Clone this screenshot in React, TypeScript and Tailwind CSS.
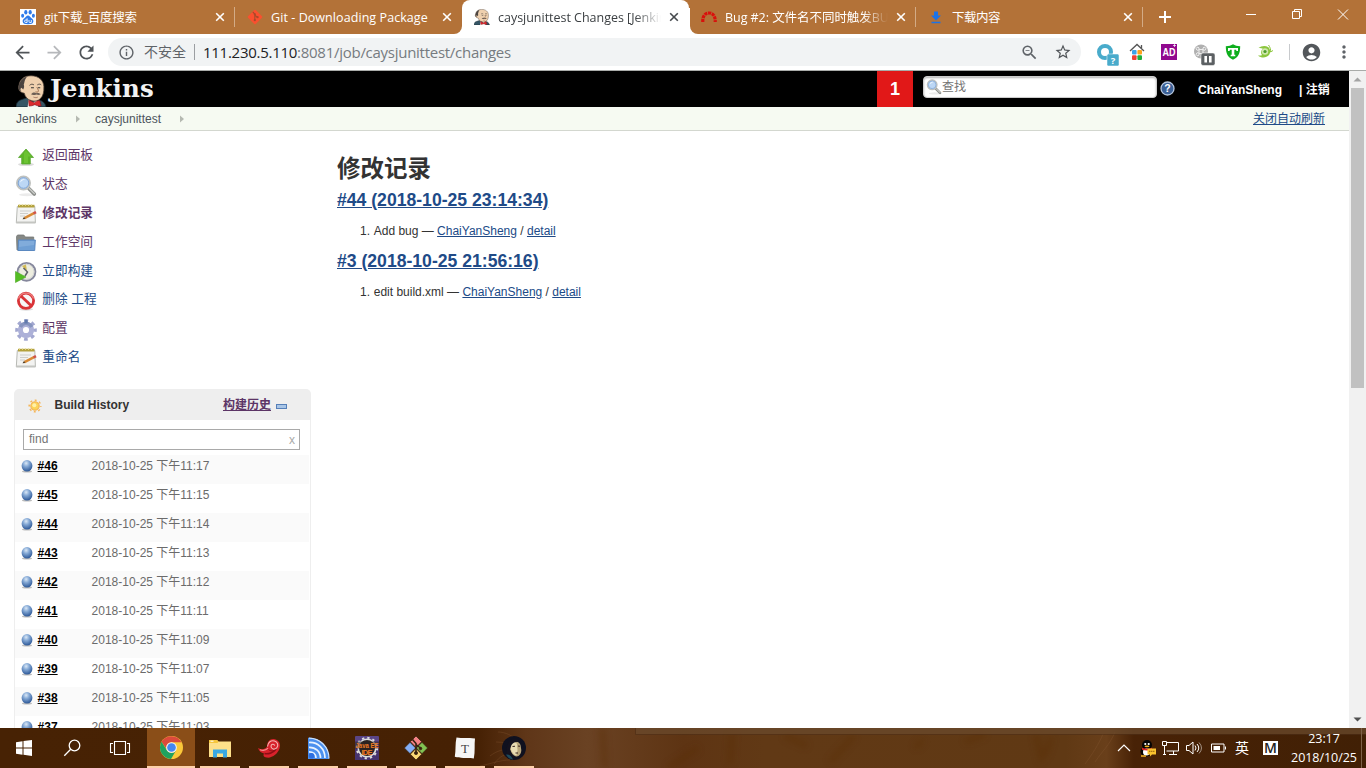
import type { ReactNode } from 'react';
import {
  MdAccountCircle,
  MdArrowBack,
  MdArrowForward,
  MdInfoOutline,
  MdMoreVert,
  MdRefresh,
  MdStarBorder,
  MdZoomOut,
} from 'react-icons/md';

const UI = "font-['Open_Sans','Noto_Sans_CJK_SC',sans-serif]";
const PAGE = "font-['Liberation_Sans','Noto_Sans_CJK_SC',sans-serif]";

/* ---------- favicons ---------- */

function BaiduIcon() {
  return (
    <svg width="16" height="16" viewBox="0 0 16 16">
      <rect width="16" height="16" fill="#fff" />
      <g fill="#2e7bea">
        <ellipse cx="5.8" cy="3.2" rx="1.6" ry="2.2" />
        <ellipse cx="10.2" cy="3.2" rx="1.6" ry="2.2" />
        <ellipse cx="2.6" cy="6.7" rx="1.5" ry="2" />
        <ellipse cx="13.4" cy="6.7" rx="1.5" ry="2" />
        <path d="M8 6.6c-1.6 0-2.2 1.5-3.3 2.5C3.400 10.200 2.400 11 2.700 12.800c.3 1.900 2 2.400 5.300 2.400s5-.5 5.300-2.400c.3-1.800-.7-2.600-2-3.700C10.200 8.100 9.600 6.600 8 6.600z" />
      </g>
      <g fill="none" stroke="#fff" strokeWidth=".9">
        <path d="M7.100 9.300v4.200H5.800a1.200 1.200 0 1 1 0-2.500h1.300M9 11v1.700c0 .6.300.8.800.8h1.500V11" />
      </g>
    </svg>
  );
}

function GitIcon() {
  return (
    <svg width="16" height="16" viewBox="0 0 16 16">
      <rect x="2.600" y="2.600" width="10.800" height="10.800" rx="1" fill="#f9502f" transform="rotate(45 8 8)" />
      <g stroke="#a9492a" strokeWidth="1.100" fill="none">
        <path d="M5.800 3l2 2v6M7.800 6l2.500 2.400" />
      </g>
      <g fill="#a9492a">
        <circle cx="7.800" cy="5.300" r="1.100" />
        <circle cx="10.600" cy="8.200" r="1.100" />
        <circle cx="7.800" cy="11.200" r="1.100" />
      </g>
    </svg>
  );
}

function Butler({ w, h }: { w: number; h: number }) {
  return (
    <svg width={w} height={h} viewBox="0 0 32 34" preserveAspectRatio="none">
      <path d="M0 34c0-4 2-7 6-8l6-2 8 2c5 0 10 2 11 8z" fill="#355565" stroke="#17242b" strokeWidth=".8" />
      <path d="M13 26l4 4 5-4 1 8H12z" fill="#f4f4f4" />
      <path d="M3 11C4 4 9 .8 15.500.8c8 0 13 5 13.300 11.500.2 6-.8 10-3.800 13-2 2-5.500 3.200-9 2-4-1-6.500-4-7.500-8C4 19 1.600 15 3 11z" fill="#efd0ae" stroke="#4b3c32" strokeWidth=".8" />
      <path d="M3 11C4.500 5 8 2.500 11.500 1.800 8.500 5 9 8 8 10c.8 2 .2 4-.6 5.500l-1.700-2c-1.500.5-1.500 3 .3 4C3 17 2 14 3 11z" fill="#4b4440" />
      <path d="M14 11c1.500-1.500 3-1.500 4.500-.5M22 10.500c1.500-1 3-1 4 0" stroke="#4b4440" strokeWidth="1" fill="none" />
      <path d="M15.500 13.500h3M22.500 13.500h2.500" stroke="#333" strokeWidth="1.100" />
      <path d="M21.500 13c1 2 2 3.500 1.500 4.500-.5.800-2 .8-2.800.3" stroke="#9a6b4b" strokeWidth="1" fill="none" />
      <path d="M15.500 20.500c2-2.300 4-2 6-1.200 1.700-.6 3 .2 4 1.200-2 1.200-3.300.5-4.500.2-2 .8-4 .9-5.500-.2z" fill="#6c5e54" />
      <path d="M18 23.500c2 .8 3.500.8 4.500 0" stroke="#a0705a" strokeWidth=".9" fill="none" />
      <path d="M13 27c2 0 3.500 1 6 2.500 1.500-1.500 3-2.500 5.500-2.500l1.500 6c-3 0-5-.5-6.500-1.500-2 1-4 1.500-6 1.500z" fill="#dc2a2f" stroke="#7d1215" strokeWidth=".6" />
    </svg>
  );
}

function RedmineIcon() {
  return (
    <svg width="16" height="16" viewBox="0 0 16 16">
      <path d="M1.800 13C1.500 8 3.500 4 8 4s6.500 4 6.200 9" fill="none" stroke="#d9100c" strokeWidth="3.200" strokeDasharray="3.100 .7" />
    </svg>
  );
}

function DownloadIcon() {
  return (
    <svg width="16" height="16" viewBox="0 0 16 16">
      <path d="M6 2.500h4v4h3L8 11.500 3 6.500h3zM3.500 12.700h9v1.600h-9z" fill="#1a73e8" />
    </svg>
  );
}

/* ---------- browser chrome ---------- */

function CloseX({ color }: { color: string }) {
  return (
    <svg width="16" height="16" viewBox="0 0 16 16" className="shrink-0">
      <path d="M4.200 4.200l7.600 7.600M11.800 4.200l-7.600 7.600" stroke={color} strokeWidth="1.600" />
    </svg>
  );
}

type TabProps = {
  icon: ReactNode;
  title: string;
  spacing: string;
  active?: boolean;
  divider?: boolean;
  fade?: boolean;
};

function Tab({ icon, title, spacing, active, divider, fade }: TabProps) {
  return (
    <div className={`relative flex h-[34px] w-[227px] shrink-0 items-center pr-[7px] pl-3 ${active ? 'rounded-t-lg bg-white' : ''}`}>
      {active && (
        <>
          <span className="absolute -right-px bottom-0 h-[26px] w-px bg-white" />
          <span className="absolute bottom-0 -left-2 h-2 w-2 bg-white" />
          <span className="absolute bottom-0 -left-2 h-2 w-2 rounded-br-lg bg-[#b37238]" />
          <span className="absolute -right-[9px] bottom-0 h-2 w-2 bg-white" />
          <span className="absolute -right-[9px] bottom-0 h-2 w-2 rounded-bl-lg bg-[#b37238]" />
        </>
      )}
      <span className="flex w-4 shrink-0">{icon}</span>
      <span
        className={`mt-px ml-2 w-[163px] shrink-0 overflow-hidden text-[12.500px] leading-5 whitespace-nowrap ${spacing} ${active ? 'text-[#3c4043]' : 'text-white'} ${fade ? '[mask-image:linear-gradient(to_right,black_84%,transparent)]' : ''}`}
      >
        {title}
      </span>
      <span className="ml-[5px] flex">
        <CloseX color={active ? '#45494d' : '#fff'} />
      </span>
      {divider && <span className="absolute top-[7px] right-0 h-5 w-px bg-[#d3ab86]" />}
    </div>
  );
}

function WindowButtons() {
  return (
    <div className="ml-auto flex h-[30px]">
      <svg width="46" height="30" viewBox="0 0 46 30" fill="none" stroke="#fff">
        <path d="M18 14.500h10" />
      </svg>
      <svg width="46" height="30" viewBox="0 0 46 30" fill="none" stroke="#fff">
        <path d="M18.500 11.500h7v7h-7zM20.500 11.500v-2h7v7h-2" />
      </svg>
      <svg width="46" height="30" viewBox="0 0 46 30" fill="none" stroke="#fff">
        <path d="M18 9.500l10 10M28 9.500l-10 10" />
      </svg>
    </div>
  );
}

function TabStrip() {
  return (
    <div className="flex h-[34px] bg-[#b37238] pl-2">
      <Tab icon={<BaiduIcon />} title="git下载_百度搜索" spacing="tracking-[-0.2px]" divider />
      <Tab icon={<GitIcon />} title="Git - Downloading Package" spacing="tracking-[0.07px]" />
      <Tab icon={<Butler w={16} h={16} />} title="caysjunittest Changes [Jenkin" spacing="tracking-[-0.02px]" active fade />
      <Tab icon={<RedmineIcon />} title="Bug #2: 文件名不同时触发BUG" spacing="tracking-[-0.05px]" divider fade />
      <Tab icon={<DownloadIcon />} title="下载内容" spacing="tracking-[-0.5px]" divider />
      <svg width="44" height="34" viewBox="0 0 44 34">
        <path d="M22 11v12M16 17h12" stroke="#fff" strokeWidth="2" />
      </svg>
      <WindowButtons />
    </div>
  );
}

function Extensions() {
  return (
    <>
      <svg width="24" height="28" viewBox="0 0 24 28" className="mt-1 ml-[14px] shrink-0">
        <circle cx="10" cy="12" r="6" fill="none" stroke="#49abcb" strokeWidth="4" />
        <rect x="12" y="14" width="12" height="12" rx="1.500" fill="#49abcb" stroke="#fff" strokeWidth=".5" />
        <text x="18" y="23.500" fontSize="9.500" fontWeight="700" fill="#fff" textAnchor="middle">?</text>
      </svg>
      <svg width="16" height="18" viewBox="0 0 16 18" className="ml-[10px] shrink-0">
        <path d="M1 8l7-6.500L15 8M12.500 2v3" stroke="#555" strokeWidth="1.300" fill="none" />
        <rect x="3" y="7" width="4.600" height="4.600" rx="1" fill="#3aa3e8" />
        <rect x="8.400" y="7" width="4.600" height="4.600" rx="1" fill="#fba21c" />
        <rect x="3" y="12.200" width="4.600" height="4.800" rx="1" fill="#ec4034" />
        <rect x="8.400" y="12.200" width="4.600" height="4.800" rx="1" fill="#1fae39" />
      </svg>
      <svg width="16" height="16" viewBox="0 0 16 16" className="ml-4 shrink-0">
        <rect width="16" height="16" fill="#91098f" />
        <text x="1.500" y="12.200" fontSize="11" fontWeight="700" fill="#fff" fontFamily="Liberation Sans" textLength="13" lengthAdjust="spacingAndGlyphs">AD</text>
        <path d="M12 1.500h3M13.500 0v3" stroke="#fff" strokeWidth=".7" />
      </svg>
      <svg width="22" height="22" viewBox="0 0 22 22" className="mt-[6px] ml-4 shrink-0">
        <circle cx="8" cy="7.500" r="7" fill="#b0b0b0" />
        <path d="M6 5.500h4v4H6zM6 5.500a1.500 1.500 0 1 1 0-1.500zM10 5.500a1.500 1.500 0 1 0 0-1.500zM6 9.500a1.500 1.500 0 1 0 0 1.500z" stroke="#eee" strokeWidth="1" fill="none" />
        <rect x="8" y="9" width="14" height="12.500" rx="2" fill="#5c6063" stroke="#fff" strokeWidth=".5" />
        <path d="M12.700 12v6.500M17.300 12v6.500" stroke="#fff" strokeWidth="2.600" />
      </svg>
      <svg width="16" height="16" viewBox="0 0 16 16" className="ml-[10px] shrink-0">
        <path d="M.8 2.200C4 2.200 6 1.500 8 .3c2 1.200 4 1.900 7.200 1.900C15.200 9.500 13 13.500 8 15.700 3 13.500.8 9.500.8 2.200z" fill="#0eae1d" />
        <path d="M3 4h10v3h-1.500l-.5-1.200H9.300v5h1v1.400H5.700v-1.400h1v-5H5L4.500 7H3z" fill="#fff" />
      </svg>
      <svg width="17" height="16" viewBox="0 0 17 16" className="ml-[15px] shrink-0">
        <path d="M2.500 4C5 2 9 1 12 3c2.500 2 2.800 5.500 1 8-2.500 3-7.500 3.500-11 .5 2 .2 3.500 0 4-.6C4.500 9.500 5 6 7 4.800 5.500 4 4 3.800 2.500 4z" fill="#8cc63e" />
        <circle cx="9" cy="7.500" r="3.200" fill="#cfe7ac" />
        <circle cx="9" cy="7.500" r="1.600" fill="#4d9c2f" />
        <path d="M12.500 1c1.500 2 2.500 4.500 2 7l2.500-1.500" stroke="#8cc63e" strokeWidth="1" fill="none" />
      </svg>
      <span className="ml-4 h-4 w-px shrink-0 bg-[#c8cacd]" />
      <MdAccountCircle size={21} className="ml-[11px] shrink-0 text-[#53575b]" />
      <MdMoreVert size={20} className="ml-[12px] shrink-0 text-[#5f6368]" />
    </>
  );
}

function Toolbar() {
  return (
    <div className="flex h-[36px] items-center bg-white pl-[12px]">
      <MdArrowBack size={21} className="shrink-0 text-[#505458]" />
      <MdArrowForward size={21} className="ml-[11px] shrink-0 text-[#b6b8bb]" />
      <MdRefresh size={21} className="ml-[11px] shrink-0 text-[#505458]" />
      <div className="ml-[11px] flex h-7 w-[973px] shrink-0 items-center rounded-full bg-[#f1f3f4] pl-[10px]">
        <MdInfoOutline size={17} className="shrink-0 text-[#5f6368]" />
        <span className="ml-[9px] w-[43px] text-[14px] leading-5 text-[#5f6368]">不安全</span>
        <span className="ml-[7px] h-4 w-px bg-[#9b9ea2]" />
        <span className="ml-2 text-[15px] leading-5 tracking-[-0.270px] text-[#767b80]">
          <span className="text-[#202124]">111.230.5.110</span>:8081/job/caysjunittest/changes
        </span>
        <MdZoomOut size={19} className="ml-auto text-[#5f6368]" />
        <MdStarBorder size={18} className="mr-[9px] ml-[15px] text-[#505458]" />
      </div>
      <Extensions />
    </div>
  );
}

/* ---------- page icons ---------- */

function Magnifier({ size }: { size: number }) {
  return (
    <svg width={size} height={size} viewBox="0 0 22 22">
      <ellipse cx="12" cy="19.800" rx="8" ry="1.500" fill="#ebebeb" />
      <path d="M13.800 13.500l5.500 5.500" stroke="#8b8e8a" strokeWidth="3.600" strokeLinecap="round" />
      <path d="M14.500 13.800l4.800 4.600" stroke="#c9cbc8" strokeWidth="1.400" strokeLinecap="round" />
      <circle cx="8.500" cy="8" r="6.600" fill="#bcd7f5" stroke="#bfc1be" strokeWidth="1.800" />
      <circle cx="8.500" cy="8" r="5.300" fill="none" stroke="#7fa5d6" strokeWidth="1" />
      <path d="M5 7.500c.5-3 3-4 5.500-3.500C8 5 6.500 6 5 7.500z" fill="#eef6fe" />
    </svg>
  );
}

function UpIcon() {
  return (
    <svg width="22" height="22" viewBox="0 0 22 22">
      <ellipse cx="11" cy="18.500" rx="8" ry="1.600" fill="#ddd" />
      <path d="M11 3l7.500 8.500h-3.200V18H6.700v-6.500H3.500z" fill="#5cb626" stroke="#5aa632" strokeWidth=".8" />
      <path d="M11 4.500l5.500 6H13V17H9V6.800z" fill="#77cc3c" opacity=".6" />
    </svg>
  );
}

function NotepadIcon() {
  return (
    <svg width="22" height="22" viewBox="0 0 22 22">
      <path d="M2.300 3.500h17.500l.6 16.300H1.300z" fill="#f3f3f1" stroke="#b8bab5" strokeWidth="1" />
      <path d="M1.300 18.500h19l.2 1.800H1.100z" fill="#c4c5c1" />
      <path d="M3 1.800h16.500v2.700H3z" fill="#b3a13c" />
      <path d="M4.500 1.200v1.600M7.500 1.200v1.600M10.500 1.200v1.600M13.500 1.200v1.600M16.500 1.200v1.600" stroke="#e8dd9a" strokeWidth="1" />
      <path d="M5 8h11M5 10.500h8M5 13h5" stroke="#cdcecb" strokeWidth="1" />
      <path d="M9.500 15.200l9.500-5" stroke="#d98a35" strokeWidth="2.500" />
      <path d="M18.500 10.400l2.500-1.300" stroke="#d0534b" strokeWidth="2.700" />
      <path d="M7.500 16.200l1.500-2.300 1.300 2.100z" fill="#4d3a22" />
    </svg>
  );
}

function FolderIcon() {
  return (
    <svg width="22" height="22" viewBox="0 0 22 22">
      <path d="M1.500 4.500L2.500 3h6.300l1.500 2h8.400v13H2z" fill="#858885" stroke="#747774" strokeWidth=".8" />
      <path d="M3.500 8h16.800l-.6 10.500H3z" fill="#6f9fd4" stroke="#5a88c0" strokeWidth="1" />
      <path d="M4.200 9h15.200l-.3 4-15.200 2z" fill="#94b9e2" opacity=".5" />
    </svg>
  );
}

function ClockIcon() {
  return (
    <svg width="22" height="22" viewBox="0 0 22 22">
      <circle cx="11.500" cy="10.800" r="8.900" fill="#ededdf" stroke="#85879c" strokeWidth="1.900" />
      <circle cx="11.500" cy="10.800" r="7.500" fill="none" stroke="#cfd0d3" strokeWidth=".9" />
      <path d="M12 10.800L7 5l4-1.500z" fill="#d3bc55" />
      <path d="M8.500 7l4 4-2.500 4" stroke="#60636b" strokeWidth="1.500" fill="none" />
      <path d="M.5 10.500l10.500 5.500L.5 21.500z" fill="#54bd23" stroke="#4ba822" strokeWidth=".6" />
    </svg>
  );
}

function ForbiddenIcon() {
  return (
    <svg width="22" height="22" viewBox="0 0 22 22">
      <ellipse cx="11" cy="19.300" rx="7" ry="1.500" fill="#ddd" />
      <circle cx="11" cy="10.800" r="7.600" fill="#f7f7f7" stroke="#d93337" strokeWidth="2.800" />
      <path d="M6 6l10 9.600" stroke="#d93337" strokeWidth="2.800" />
      <path d="M3.500 8.500a7.900 7.900 0 0 1 15 0" stroke="#ec7f7e" strokeWidth="1.400" fill="none" />
    </svg>
  );
}

function GearIcon() {
  return (
    <svg width="22" height="22" viewBox="0 0 22 22">
      <circle cx="11" cy="11" r="9" fill="none" stroke="#a3a8d0" strokeWidth="3.600" strokeDasharray="3.600 3.470" strokeDashoffset="1.800" />
      <circle cx="11" cy="11" r="5.600" fill="none" stroke="#adb1d8" strokeWidth="5" />
      <path d="M5.300 8a6.300 6.300 0 0 1 11.400 0" stroke="#8795bf" strokeWidth="3.400" fill="none" />
      <path d="M9.400.5h3.200v4H9.400z" fill="#617aac" />
    </svg>
  );
}

function SunIcon() {
  return (
    <svg width="14" height="14" viewBox="0 0 14 14">
      <circle cx="7" cy="7" r="5.800" fill="none" stroke="#f5b75a" strokeWidth="1.600" strokeDasharray="2 2.555" strokeDashoffset="1" />
      <circle cx="7" cy="7" r="4.200" fill="#fbd45a" stroke="#f4ad4a" strokeWidth="1" />
      <circle cx="6.300" cy="6.300" r="2" fill="#fff0a8" />
    </svg>
  );
}

function BlueBall() {
  return (
    <svg width="14" height="14" viewBox="0 0 14 14">
      <defs>
        <radialGradient id="ball" cx="42%" cy="28%" r="70%">
          <stop offset="0" stopColor="#dbe8f6" />
          <stop offset=".4" stopColor="#86aad6" />
          <stop offset="1" stopColor="#2f5a99" />
        </radialGradient>
      </defs>
      <ellipse cx="7" cy="12.600" rx="5" ry="1" fill="#bbb" />
      <ellipse cx="7" cy="6.800" rx="5.400" ry="5.800" fill="url(#ball)" />
    </svg>
  );
}

/* ---------- jenkins page ---------- */

function JenkinsHeader() {
  return (
    <header className="flex h-9 shrink-0 bg-black pl-4">
      <div className="flex h-9 w-[161px] items-end overflow-hidden">
        <Butler w={31} h={32} />
        <span className="ml-[3px] h-9 font-['DejaVu_Serif',serif] text-[24.500px] leading-[35px] font-bold tracking-[0.15px] text-[#f2f2f2]">Jenkins</span>
      </div>
      <span className="ml-auto flex w-9 items-center justify-center bg-[#e11818] text-[18px] font-bold text-white">1</span>
      <div className="mt-[5px] ml-[10px] flex h-[22px] w-[234px] items-center rounded-[4px] border border-[#ccc] bg-white pl-[2px] shadow-[inset_0_1px_2px_rgba(0,0,0,0.3)]">
        <Magnifier size={16} />
        <span className="text-[12px] leading-4 text-[#757575]">查找</span>
      </div>
      <svg width="15" height="15" viewBox="0 0 15 15" className="mt-[10px] ml-[3px]">
        <circle cx="7.500" cy="7.500" r="6.500" fill="#3b6096" stroke="#b4c5dd" strokeWidth="1.300" />
        <text x="7.500" y="11.300" fontSize="10.500" fontWeight="700" fill="#fff" textAnchor="middle" fontFamily="Liberation Sans">?</text>
      </svg>
      <span className="mt-[11px] ml-[23px] w-[101px] text-[12px] leading-4 font-bold text-white">ChaiYanSheng</span>
      <span className="mt-[11px] w-[50px] text-[12px] leading-4 font-bold whitespace-nowrap text-white">| 注销</span>
    </header>
  );
}

function Crumb() {
  return (
    <svg width="4" height="8" viewBox="0 0 4 8" className="shrink-0">
      <path d="M0 .5L4 4 0 7.500z" fill="#b5b9b1" />
    </svg>
  );
}

function Breadcrumbs() {
  return (
    <div className="flex h-6 shrink-0 items-center border-b border-[#d3d7cf] bg-[#f6faf2] pl-4 text-[12px] leading-4 text-[#4d545d]">
      <span className="w-[60px]">Jenkins</span>
      <Crumb />
      <span className="ml-[15px] w-[85px]">caysjunittest</span>
      <Crumb />
      <span className="mr-6 ml-auto text-[#204a87] underline">关闭自动刷新</span>
    </div>
  );
}

const tasks: { icon: ReactNode; label: string; tone: string }[] = [
  { icon: <UpIcon />, label: '返回面板', tone: 'text-[#5c3566]' },
  { icon: <Magnifier size={22} />, label: '状态', tone: 'text-[#5c3566]' },
  { icon: <NotepadIcon />, label: '修改记录', tone: 'font-bold text-[#5c3566]' },
  { icon: <FolderIcon />, label: '工作空间', tone: 'text-[#5c3566]' },
  { icon: <ClockIcon />, label: '立即构建', tone: 'text-[#204a87]' },
  { icon: <ForbiddenIcon />, label: '删除 工程', tone: 'text-[#204a87]' },
  { icon: <GearIcon />, label: '配置', tone: 'text-[#5c3566]' },
  { icon: <NotepadIcon />, label: '重命名', tone: 'text-[#204a87]' },
];

const builds = [
  ['#46', '17'],
  ['#45', '15'],
  ['#44', '14'],
  ['#43', '13'],
  ['#42', '12'],
  ['#41', '11'],
  ['#40', '09'],
  ['#39', '07'],
  ['#38', '05'],
  ['#37', '03'],
];

function BuildHistory() {
  return (
    <section className="ml-[14px] w-[297px]">
      <div className="flex h-[31px] items-center rounded-t-[5px] bg-[#eee] pl-[14px]">
        <span className="mt-[3px] flex">
          <SunIcon />
        </span>
        <span className="ml-[12.500px] text-[12px] leading-4 font-bold text-[#333]">Build History</span>
        <span className="mt-px ml-auto text-[12px] leading-4 font-bold text-[#5c3566] underline">构建历史</span>
        <span className="mt-[3px] mr-6 ml-[5px] h-[5px] w-[11px] border border-[#557fb8] bg-[#a8c5e6]" />
      </div>
      <div className="border-x border-[#eee] pt-[9px]">
        <div className="mr-[10px] ml-2 flex h-[21px] items-center justify-between border border-[#a9a9a9] pr-1 pl-[5px] text-[12px] leading-4 text-[#757575]">
          <span className="pb-px">find</span>
          <span className="pt-px text-[#aaa]">x</span>
        </div>
        <div className="mt-[5px] mr-px">
          {builds.map(([id, minute]) => (
            <div key={id} className="flex h-[29px] pt-1 pl-[5px] text-[12px] leading-[14px] odd:bg-[#fafafa]">
              <BlueBall />
              <span className="ml-[3.600px] w-[54px] font-bold text-black underline">{id}</span>
              <span className="text-[#6b6b6b]">2018-10-25 下午11:{minute}</span>
            </div>
          ))}
        </div>
      </div>
    </section>
  );
}

function ChangeSet({ title, message }: { title: string; message: string }) {
  return (
    <>
      <h2 className="h-[21px] text-[17.600px] leading-[21px] font-bold text-[#204a87] underline">{title}</h2>
      <p className="mt-[12px] mb-[12px] ml-[23px] h-4 text-[12px] leading-4 text-[#333]">
        <span className="mr-[3.700px]">1.</span>
        {message} — <a className="text-[#204a87] underline">ChaiYanSheng</a> / <a className="text-[#204a87] underline">detail</a>
      </p>
    </>
  );
}

function JenkinsPage() {
  return (
    <div className={`flex min-w-0 flex-1 flex-col ${PAGE}`}>
      <JenkinsHeader />
      <Breadcrumbs />
      <div className="flex min-h-0 flex-1 overflow-hidden">
        <aside className="w-[337px] shrink-0">
          <ul className="mt-[10px] h-[248px]">
            {tasks.map((t) => (
              <li key={t.label} className="flex h-[28.800px] items-center pl-[15px]">
                <span className="mt-[3px] flex">{t.icon}</span>
                <span className={`ml-[5.300px] text-[12.700px] leading-4 ${t.tone}`}>{t.label}</span>
              </li>
            ))}
          </ul>
          <BuildHistory />
        </aside>
        <main className="pt-[21px]">
          <h1 className="mb-[8px] h-[30px] text-[23.500px] leading-[34px] font-bold text-[#333]">修改记录</h1>
          <ChangeSet title="#44 (2018-10-25 23:14:34)" message="Add bug" />
          <ChangeSet title="#3 (2018-10-25 21:56:16)" message="edit build.xml" />
        </main>
      </div>
    </div>
  );
}

function Scrollbar() {
  return (
    <div className="flex w-[17px] shrink-0 flex-col items-center bg-[#f1f1f1]">
      <svg width="17" height="17" viewBox="0 0 17 17">
        <path d="M8.500 6.500l4 4h-8z" fill="#a3a3a3" />
      </svg>
      <div className="h-[300px] w-[13px] bg-[#c1c1c1]" />
      <svg width="17" height="17" viewBox="0 0 17 17" className="mt-auto">
        <path d="M4.500 6.500h8l-4 4z" fill="#505050" />
      </svg>
    </div>
  );
}

/* ---------- taskbar ---------- */

function ChromeIcon() {
  return (
    <svg width="23" height="23" viewBox="0 0 24 24">
      <circle cx="12" cy="12" r="12" fill="#fbc83a" />
      <path d="M1.600 6A12 12 0 0 1 22.400 6.500H12A5.500 5.500 0 0 0 6.800 13.500z" fill="#db4a3c" />
      <path d="M1.600 6A12 12 0 0 0 11.500 24l5.200-9A5.500 5.500 0 0 1 7 14.500z" fill="#1fa15f" />
      <circle cx="12" cy="12" r="5.600" fill="#f3f3f3" />
      <circle cx="12" cy="12" r="4.500" fill="#4687f1" />
    </svg>
  );
}

function ExplorerIcon() {
  return (
    <svg width="22" height="19" viewBox="0 0 22 19">
      <path d="M0 1h8l1.500 1.500H22v15.500H0z" fill="#fde08a" />
      <path d="M0 1h8l1.500 1.500-1 1.500H0z" fill="#f6c63d" />
      <path d="M4 18.500V10.500h14v8h-4v-4H8v4z" fill="#3aa8e4" />
      <path d="M1.500 1.700h3v1h-3z" fill="#fff" />
    </svg>
  );
}

function ShellIcon() {
  return (
    <svg width="23" height="21" viewBox="0 0 23 21">
      <path d="M0 10c4 2 7 1.500 9-1.500C9 3.500 12 .5 16 1c5 .8 7 5 5.500 9.500C20 15.500 14 20.500 8.500 19.500 5.500 19 5 17.500 6 15.500 3 15 1 13 0 10z" fill="#d8222b" />
      <path d="M6.500 15.500c4 1 9-1 11.500-4.500" stroke="#8e0d14" strokeWidth="1.600" fill="none" />
      <path d="M2 11.700c3 1.200 6 .5 8-1.500" stroke="#f3908f" strokeWidth="1.200" fill="none" />
      <path d="M9.500 8.500C10 4 13 2 16.500 3c3.300 1 4.300 4.500 2.200 7-2 2-5.700 1.200-5.700-1.800 0-2.200 3-2.800 3.700-.6" stroke="#f6b5b3" strokeWidth="1.100" fill="none" />
      <path d="M10.500 11.500c2 2 5.500 1.800 8-.5" stroke="#8e0d14" strokeWidth="1" fill="none" />
    </svg>
  );
}

function WifiFeedIcon() {
  return (
    <svg width="23" height="23" viewBox="0 0 23 23" fill="none">
      <path d="M1 .8C13 0 22.500 9 22 22L1 22z" fill="#4b90ee" />
      <path d="M2 5.500c9-.5 16 6.500 16 15.500M2 10.300C8.500 10 13.500 14.500 13.500 21M2 14.800c4 0 7 2.500 7 6.200" stroke="#e9f3ff" strokeWidth="1.700" />
      <path d="M2 1.200c11 0 20 8.800 20 20.300" stroke="#cfe2fb" strokeWidth="1.200" />
      <circle cx="4.500" cy="18.800" r="2.800" fill="#2d6fe0" />
    </svg>
  );
}

function JavaEEIcon() {
  return (
    <svg width="24" height="24" viewBox="0 0 24 24">
      <rect width="24" height="24" rx="1" fill="#5a4586" />
      <rect y="12" width="24" height="12" fill="#46336f" />
      <circle cx="12" cy="12" r="8.800" fill="#2b2222" stroke="#dcdcdc" strokeWidth="1.600" />
      <circle cx="12" cy="12" r="10.200" fill="none" stroke="#dcdcdc" strokeWidth="2" strokeDasharray="2.300 3.040" />
      <rect y="5.500" width="24" height="7" fill="#2b2222" opacity=".55" />
      <text x=".5" y="12" fontSize="7.500" fontWeight="700" fill="#f07a22" fontFamily="Liberation Sans" textLength="23" lengthAdjust="spacingAndGlyphs">Java EE</text>
      <text x="6.500" y="18.500" fontSize="7.500" fontWeight="700" fill="#f07a22" fontFamily="Liberation Sans" textLength="11">IDE</text>
    </svg>
  );
}

function GitBashIcon() {
  return (
    <svg width="24" height="24" viewBox="0 0 24 24" stroke="#3b2410" strokeWidth=".8">
      <path d="M12 0l5.700 5.700L12 11.500 6.300 5.700z" fill="#f48183" />
      <path d="M6 6.300l5.700 5.700L6 17.700.300 12z" fill="#84aef5" />
      <path d="M18 6.300l5.700 5.700-5.700 5.700-5.700-5.700z" fill="#82c353" />
      <path d="M12 12.500l5.700 5.700L12 24l-5.700-5.800z" fill="#fbd976" />
      <path d="M8.500 3.500l3.500 4v9M12 8.500l5 4" stroke="#352010" strokeWidth="1.600" fill="none" />
      <circle cx="12" cy="17" r="1.600" fill="#352010" />
      <circle cx="16.500" cy="12.500" r="1.300" fill="#352010" />
    </svg>
  );
}

function TyporaIcon() {
  return (
    <svg width="22" height="22" viewBox="0 0 22 22">
      <path d="M2.500.5C8 1.500 14 .5 21 1.500c-.8 6 .3 13-1.200 20C14 20 7 22 .8 19.800 2 13 1 7 2.500.5z" fill="#f6f6f6" />
      <text x="11" y="15.500" fontSize="13" fill="#444" textAnchor="middle" fontFamily="Liberation Serif">T</text>
    </svg>
  );
}

function PortraitIcon() {
  return (
    <svg width="24" height="24" viewBox="0 0 24 24">
      <circle cx="12" cy="12" r="12" fill="#10111f" />
      <path d="M8 7.500c3-3.500 9-3 10.500 1.500l.8 5c0 3.500-2 6.500-4.800 6.500-3-.5-5.500-3.500-6.500-7z" fill="#b9a67a" />
      <path d="M9 8c2-2 5-2 6 0l.5 6-1 5.500c-3-.5-5-3.500-5.500-6z" fill="#e9dcb3" />
      <path d="M6 8c2-5 9-7 13-2-4-1-8 0-9.500 3L8 13c.5 3 1.500 4 2.500 6l-5 1C4 17 4.500 11 6 8z" fill="#14121f" />
      <path d="M10.500 10.500l2.500-.3M16 10l2 .3M13.500 17h2.500" stroke="#3c2722" strokeWidth="1.100" />
      <path d="M4 18.500c3-.5 5 1 7 5-3 0-5.500-2-7-5z" fill="#1d4a5c" />
    </svg>
  );
}

function Wallpaper() {
  return (
    <svg width="1366" height="40" viewBox="0 0 1366 40" className="absolute inset-0">
      <defs>
        <linearGradient id="fur" x1="0" x2="1366" y1="0" y2="0" gradientUnits="userSpaceOnUse">
          <stop offset="0" stopColor="#472204" />
          <stop offset=".35" stopColor="#462104" />
          <stop offset=".385" stopColor="#5f3618" />
          <stop offset=".43" stopColor="#6a4223" />
          <stop offset=".5" stopColor="#5e3413" />
          <stop offset=".56" stopColor="#613915" />
          <stop offset=".78" stopColor="#603914" />
          <stop offset=".81" stopColor="#693f1a" />
          <stop offset=".83" stopColor="#482206" />
          <stop offset="1" stopColor="#412005" />
        </linearGradient>
        <filter id="soft">
          <feGaussianBlur stdDeviation="3" />
        </filter>
      </defs>
      <rect width="1366" height="40" fill="url(#fur)" />
      <g filter="url(#soft)" stroke="#582a05" strokeWidth="6" opacity=".35">
        <path d="M602 0l3 40M668 40l30-20M732 6l-2 30M785 8l22 10M830 34l24-26M915 20l8-8M965 14l20-8M1036 6l6 28M1045 28l6-18" />
      </g>
      <g stroke="#8b5a35" strokeWidth=".6" opacity=".5" fill="none">
        <path d="M494 36c6-8 10-10 22-12M490 28c8-6 12-6 24-8M496 14c8 0 14 2 22 4M498 4c8 0 14 4 20 8M480 38c10-2 20-6 30-6M1095 34c8-12 14-16 20-30M1085 36c6-8 14-20 18-30" />
      </g>
      <path d="M636 0h730v6H636z" fill="#6a4a2c" opacity=".75" />
      <path d="M635.500 0v6.500H1366" stroke="#4c2f17" fill="none" opacity=".6" />
    </svg>
  );
}

const apps: { icon: ReactNode; name: string }[] = [
  { icon: <ExplorerIcon />, name: 'explorer' },
  { icon: <ShellIcon />, name: 'shell' },
  { icon: <WifiFeedIcon />, name: 'feed' },
  { icon: <JavaEEIcon />, name: 'eclipse' },
  { icon: <GitBashIcon />, name: 'git' },
  { icon: <TyporaIcon />, name: 'typora' },
  { icon: <PortraitIcon />, name: 'portrait' },
];

function Tray() {
  return (
    <div className="ml-auto flex items-center">
      <svg width="14" height="8" viewBox="0 0 14 8">
        <path d="M1 7l6-6 6 6" stroke="#fff" strokeWidth="1.200" fill="none" />
      </svg>
      <svg width="17" height="17" viewBox="0 0 17 17" className="ml-[8px]">
        <ellipse cx="8" cy="5" rx="5" ry="5" fill="#050505" />
        <ellipse cx="7.500" cy="11.500" rx="6" ry="5" fill="#050505" />
        <ellipse cx="7.500" cy="12" rx="3.500" ry="3.500" fill="#fff" />
        <circle cx="6.300" cy="4" r="1.100" fill="#fff" />
        <circle cx="9.700" cy="4" r="1.100" fill="#fff" />
        <ellipse cx="8" cy="6.300" rx="2.500" ry=".9" fill="#f6b320" />
        <path d="M3 7.700c3 1.300 7 1.300 10 0v2c-3 1-7 1-10 0z" fill="#e02323" />
        <path d="M8.500 8.500H17v6h-4l-2 2v-2H8.500z" fill="#f9c22e" />
        <path d="M10.200 11.300h1.200M12.200 11.300h1.200M14.200 11.300h1.200" stroke="#7c4d06" />
        <path d="M2 16h5" stroke="#f6b320" strokeWidth="1.500" />
      </svg>
      <svg width="17" height="14" viewBox="0 0 17 14" className="ml-[6px]" fill="none" stroke="#fff">
        <path d="M4.500 1.500h12v8.500h-12M.5.500h4v4h-4zM2.500 4.500v9M7 13.500h8M11.500 10v3.500M1 13.500h3" />
      </svg>
      <svg width="17" height="14" viewBox="0 0 17 14" className="ml-[7px]" fill="none" stroke="#fff">
        <path d="M.5 4.500h2.500l4-3.500v12l-4-3.500H.5zM9 4.500q2 2.500 0 5M11 3q3.500 4 0 8" />
        <path d="M13 1.500q5 5.500 0 11" opacity=".5" />
      </svg>
      <svg width="16" height="10" viewBox="0 0 16 10" className="ml-2" fill="none" stroke="#fff">
        <path d="M.5 1h12.500v8H.5zM14.500 3.500v3" />
        <path d="M2.500 3H9v4H2.500z" fill="#fff" stroke="none" />
      </svg>
      <span className="ml-2 text-[14px] leading-5 text-white">英</span>
      <span className="ml-[14px] flex h-[14px] w-[15px] items-center justify-center overflow-hidden bg-white text-[14px] leading-[14px] font-semibold text-[#222]">M</span>
      <div className="ml-[11px] w-[70px] pb-px text-center text-[12.500px] leading-[19px] tracking-[-0.050px] text-white">
        <div>23:17</div>
        <div>2018/10/25</div>
      </div>
      <span className="mr-1 ml-[2px] h-10 w-px bg-[#7d6148]" />
    </div>
  );
}

function Taskbar() {
  return (
    <footer className="relative h-10 shrink-0 overflow-hidden">
      <Wallpaper />
      <div className="relative flex h-10">
        <svg width="48" height="40" viewBox="0 0 48 40">
          <path d="M16 14.300l6.500-1v6.200H16zM23.500 13.100L32 12v7.500h-8.500zM16 20.500h6.500v6.200l-6.500-1zM23.500 20.500H32V28l-8.500-1.200z" fill="#fff" />
        </svg>
        <svg width="48" height="40" viewBox="0 0 48 40" fill="none" stroke="#fff" strokeWidth="1.300">
          <circle cx="26.500" cy="17.500" r="5.300" />
          <path d="M22.700 21.300L16.300 27.700" />
        </svg>
        <svg width="51" height="40" viewBox="0 0 51 40" fill="none" stroke="#fff" strokeWidth="1.100">
          <path d="M18.500 13.500h11v13h-11zM17 15.500h-2.500v9H17M31 15.500h2.500v9H31" />
        </svg>
        <div className="flex h-10 w-12 items-center justify-center border-b-2 border-[#fdd1aa] bg-[#8a4e18]">
          <ChromeIcon />
        </div>
        {apps.map((a) => (
          <div key={a.name} className="ml-px flex w-12 justify-center">
            <div className="flex h-10 w-10 items-center justify-center border-b-2 border-[#fdd1aa] pt-0.5">{a.icon}</div>
          </div>
        ))}
        <Tray />
      </div>
    </footer>
  );
}

export default function App() {
  return (
    <div className={`flex h-[768px] w-[1366px] flex-col overflow-hidden bg-white ${UI}`}>
      <TabStrip />
      <Toolbar />
      <div className="flex min-h-0 flex-1 border-t border-[#a9aba9]">
        <JenkinsPage />
        <Scrollbar />
      </div>
      <Taskbar />
    </div>
  );
}
